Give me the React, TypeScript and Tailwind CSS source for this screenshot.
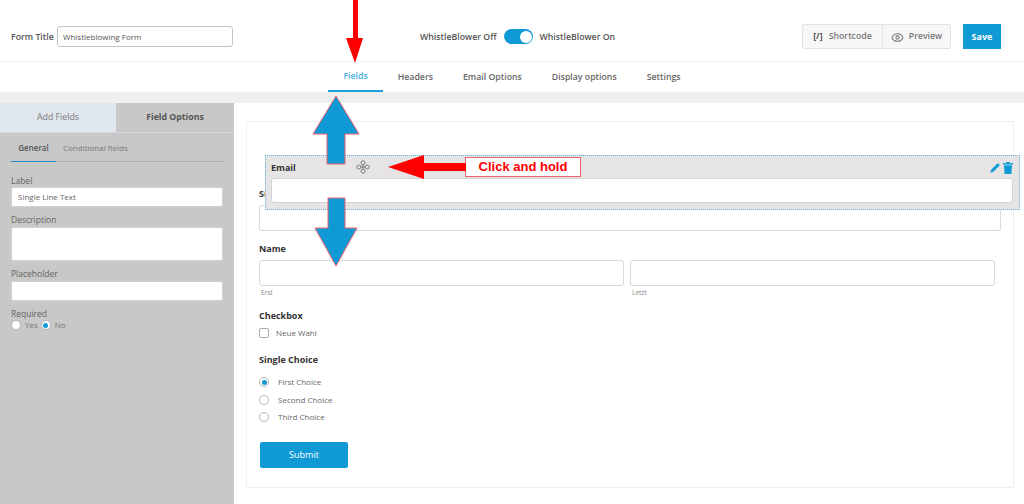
import { Eye, Pencil } from 'lucide-react';

const navItems = ['Fields', 'Headers', 'Email Options', 'Display options', 'Settings'];
const choices = ['First Choice', 'Second Choice', 'Third Choice'];

function Radio({ checked = false }: { checked?: boolean }) {
  return (
    <span className="w-[10px] h-[10px] rounded-full bg-white border border-[#b5b5b5] flex items-center justify-center shrink-0">
      {checked && <span className="w-[5px] h-[5px] rounded-full bg-[#0f9ad6]" />}
    </span>
  );
}

function SideLabel({ children }: { children: string }) {
  return <div className="h-[12px] text-[8.5px] leading-[14px] text-[#666]">{children}</div>;
}

function Annotations() {
  return (
    <svg className="absolute left-0 top-0 pointer-events-none" width="1024" height="504" viewBox="0 0 1024 504">
      <polygon points="353,0 358,0 358,38 363,38 355,63 346,38 353,38" fill="#ff0000" />
      <polygon points="336,96 359,134 345,134 345,164 327,164 327,134 313,134" fill="#0f9ad6" stroke="#f0606a" />
      <polygon points="328,198 345,198 345,228 357,228 336,266 315,228 328,228" fill="#0f9ad6" stroke="#f0606a" />
      <polygon points="388,167 424,155 424,163 466,163 466,171 424,171 424,179" fill="#ff0000" />
    </svg>
  );
}

function DraggedRow() {
  return (
    <div className="absolute left-[265px] top-[155px] w-[755px] h-[55px] bg-[#e6e4e5] border border-dotted border-[#5db8e6] pt-[4px] pl-[5px] pr-[6px]">
      <div className="h-[18px] flex items-center justify-between pb-[3px]">
        <span className="text-[9px] font-bold text-[#333]">Email</span>
        <span className="flex items-center gap-[3px]">
          <Pencil size={10} fill="#0f9ad6" stroke="#0f9ad6" />
          <svg width="10" height="12" viewBox="0 0 10 12" fill="#0f9ad6">
            <path d="M3.5 0H6.5L7 1H10V2.4H0V1H3ZM1 3.2H9L8.4 12H1.6Z" />
          </svg>
        </span>
      </div>
      <div className="h-[25px] bg-white border border-[#d5d3d4] rounded-[3px]" />
      <svg className="absolute left-[90px] top-[4px]" width="14" height="14" viewBox="0 0 14 14" fill="none" stroke="#7d7d7d" strokeWidth="1">
        <circle cx="7" cy="2.8" r="2" />
        <circle cx="7" cy="11.2" r="2" />
        <circle cx="2.8" cy="7" r="2" />
        <circle cx="11.2" cy="7" r="2" />
        <path d="M7 4.8V9.2M4.8 7H9.2" />
      </svg>
      <div className="absolute left-[199px] top-[1px] w-[116px] h-[20px] bg-white border border-[#f0606a] flex items-center justify-center font-['Liberation_Sans'] font-bold text-[13px] text-[#ff0000]">
        Click and hold
      </div>
    </div>
  );
}

export default function App() {
  return (
    <div className="relative w-[1024px] h-[504px] overflow-hidden bg-white font-['Open_Sans',sans-serif] flex flex-col">
      <header className="h-[62px] shrink-0 border-b border-[#efefef] flex items-center pt-[12px] pl-[11px] pr-[23px]">
        <span className="text-[8.75px] font-semibold text-[#555] w-[46px] whitespace-nowrap pt-[2px]">Form Title</span>
        <div className="w-[176px] h-[21px] border border-[#c4c4c4] rounded-[3px] flex items-center pl-[5px] text-[8px] text-[#555]">
          Whistleblowing Form
        </div>
        <div className="ml-[187px] flex items-center text-[8.75px] font-semibold text-[#555]">
          <span className="pt-[2px]">WhistleBlower Off</span>
          <span className="w-[29px] h-[15px] ml-[8px] mr-[6px] rounded-full bg-[#0f9ad6] flex items-center justify-end pr-[1px]">
            <span className="w-[12px] h-[12px] rounded-full bg-white" />
          </span>
          <span className="pt-[2px]">WhistleBlower On</span>
        </div>
        <div className="ml-auto flex items-center">
          <div className="flex h-[25px] w-[149px] bg-[#f7f7f7] border border-[#e3e3e3] rounded-[2px] text-[8.75px] font-semibold text-[#777]">
            <span className="w-[80px] border-r border-[#e3e3e3] flex items-center justify-center gap-[6px] pt-[1px]">
              <span className="text-[#555] font-bold">[/]</span>Shortcode
            </span>
            <span className="flex-1 flex items-center justify-center gap-[5px] pt-[1px]">
              <Eye size={13} stroke="#777" />Preview
            </span>
          </div>
          <button className="ml-[12px] w-[38px] h-[25px] bg-[#0f9ad6] text-white text-[9px] font-bold">Save</button>
        </div>
      </header>

      <nav className="h-[30px] shrink-0 flex justify-center text-[8.75px] font-semibold text-[#666]">
        {navItems.map((item, i) => (
          <div
            key={item}
            className={`h-[30px] flex items-center px-[15px] ${i === 0 ? 'text-[#4aaee0] border-b-2 border-[#1ba1dc] pt-[2px]' : 'pt-[2px]'}`}
          >
            {item}
          </div>
        ))}
      </nav>

      <div className="h-[11px] shrink-0 bg-[#efefef]" />

      <div className="flex-1 flex min-h-0">
        <aside className="w-[234px] shrink-0 bg-[#c8c8c8]">
          <div className="flex h-[30px] text-[8.75px] border-b border-[#d8d8d8]">
            <div className="w-[116px] bg-[#e0e7ee] text-[#777] flex items-center justify-center pt-[1px]">Add Fields</div>
            <div className="flex-1 font-bold text-[#555] flex items-center justify-center pt-[1px]">Field Options</div>
          </div>
          <div className="px-[11px]">
            <div className="flex h-[29px] border-b border-[#aeaeae] text-[8px]">
              <div className="w-[45px] h-[29px] border-b border-[#1b8fc4] text-[#555] font-semibold flex items-center justify-center pt-[1px]">General</div>
              <div className="ml-[7px] text-[#777] flex items-center pt-[1px]">Conditional fields</div>
            </div>
            <div className="pt-[12px]">
              <SideLabel>Label</SideLabel>
              <div className="mt-[1px] h-[20px] bg-white rounded-[2px] border border-[#d2d2d2] flex items-center pl-[6px] text-[8px] text-[#666]">Single Line Text</div>
              <div className="mt-[6px]"><SideLabel>Description</SideLabel></div>
              <div className="mt-[2px] h-[34px] bg-white rounded-[2px] border border-[#d2d2d2]" />
              <div className="mt-[6px]"><SideLabel>Placeholder</SideLabel></div>
              <div className="mt-[2px] h-[20px] bg-white rounded-[2px] border border-[#d2d2d2]" />
              <div className="mt-[6px]"><SideLabel>Required</SideLabel></div>
              <div className="flex items-center text-[8px] text-[#777]">
                <Radio />
                <span className="ml-[4px] mr-[3px]">Yes</span>
                <Radio checked />
                <span className="ml-[4px]">No</span>
              </div>
            </div>
          </div>
        </aside>

        <main className="flex-1 pl-[12px] pr-[10px] pt-[18px]">
          <div className="h-[367px] border border-[#efefef] pl-[12px] pr-[12px] pt-[65px]">
            <div className="text-[9px] font-bold text-[#333] h-[18px]">Single Line Text</div>
            <div className="h-[26px] border border-[#d8d8d8] rounded-[3px]" />
            <div className="mt-[11px] text-[9px] font-bold text-[#333] h-[18px]">Name</div>
            <div className="flex gap-[6px] pr-[6px]">
              <div className="flex-1">
                <div className="h-[26px] border border-[#d8d8d8] rounded-[3px]" />
                <div className="text-[6.5px] text-[#888] mt-[2px] pl-[2px]">Erst</div>
              </div>
              <div className="flex-1">
                <div className="h-[26px] border border-[#d8d8d8] rounded-[3px]" />
                <div className="text-[6.5px] text-[#888] mt-[2px] pl-[2px]">Letzt</div>
              </div>
            </div>
            <div className="mt-[11px] text-[9px] font-bold text-[#333] h-[14px]">Checkbox</div>
            <div className="mt-[4px] flex items-center text-[8px] text-[#666]">
              <span className="w-[10px] h-[10px] border border-[#aaa] rounded-[2px] mr-[7px]" />
              Neue Wahl
            </div>
            <div className="mt-[14px] text-[9px] font-bold text-[#333] h-[14px]">Single Choice</div>
            <div className="mt-[10px] flex flex-col gap-[6.5px]">
              {choices.map((c, i) => (
                <div key={c} className="flex items-center h-[11px] text-[8px] text-[#666]">
                  <Radio checked={i === 0} />
                  <span className="ml-[9px]">{c}</span>
                </div>
              ))}
            </div>
            <button className="mt-[19px] ml-[1px] w-[88px] h-[26px] bg-[#0f9ad6] rounded-[2px] text-white text-[9px]">Submit</button>
          </div>
        </main>
      </div>

      <DraggedRow />
      <Annotations />
    </div>
  );
}
